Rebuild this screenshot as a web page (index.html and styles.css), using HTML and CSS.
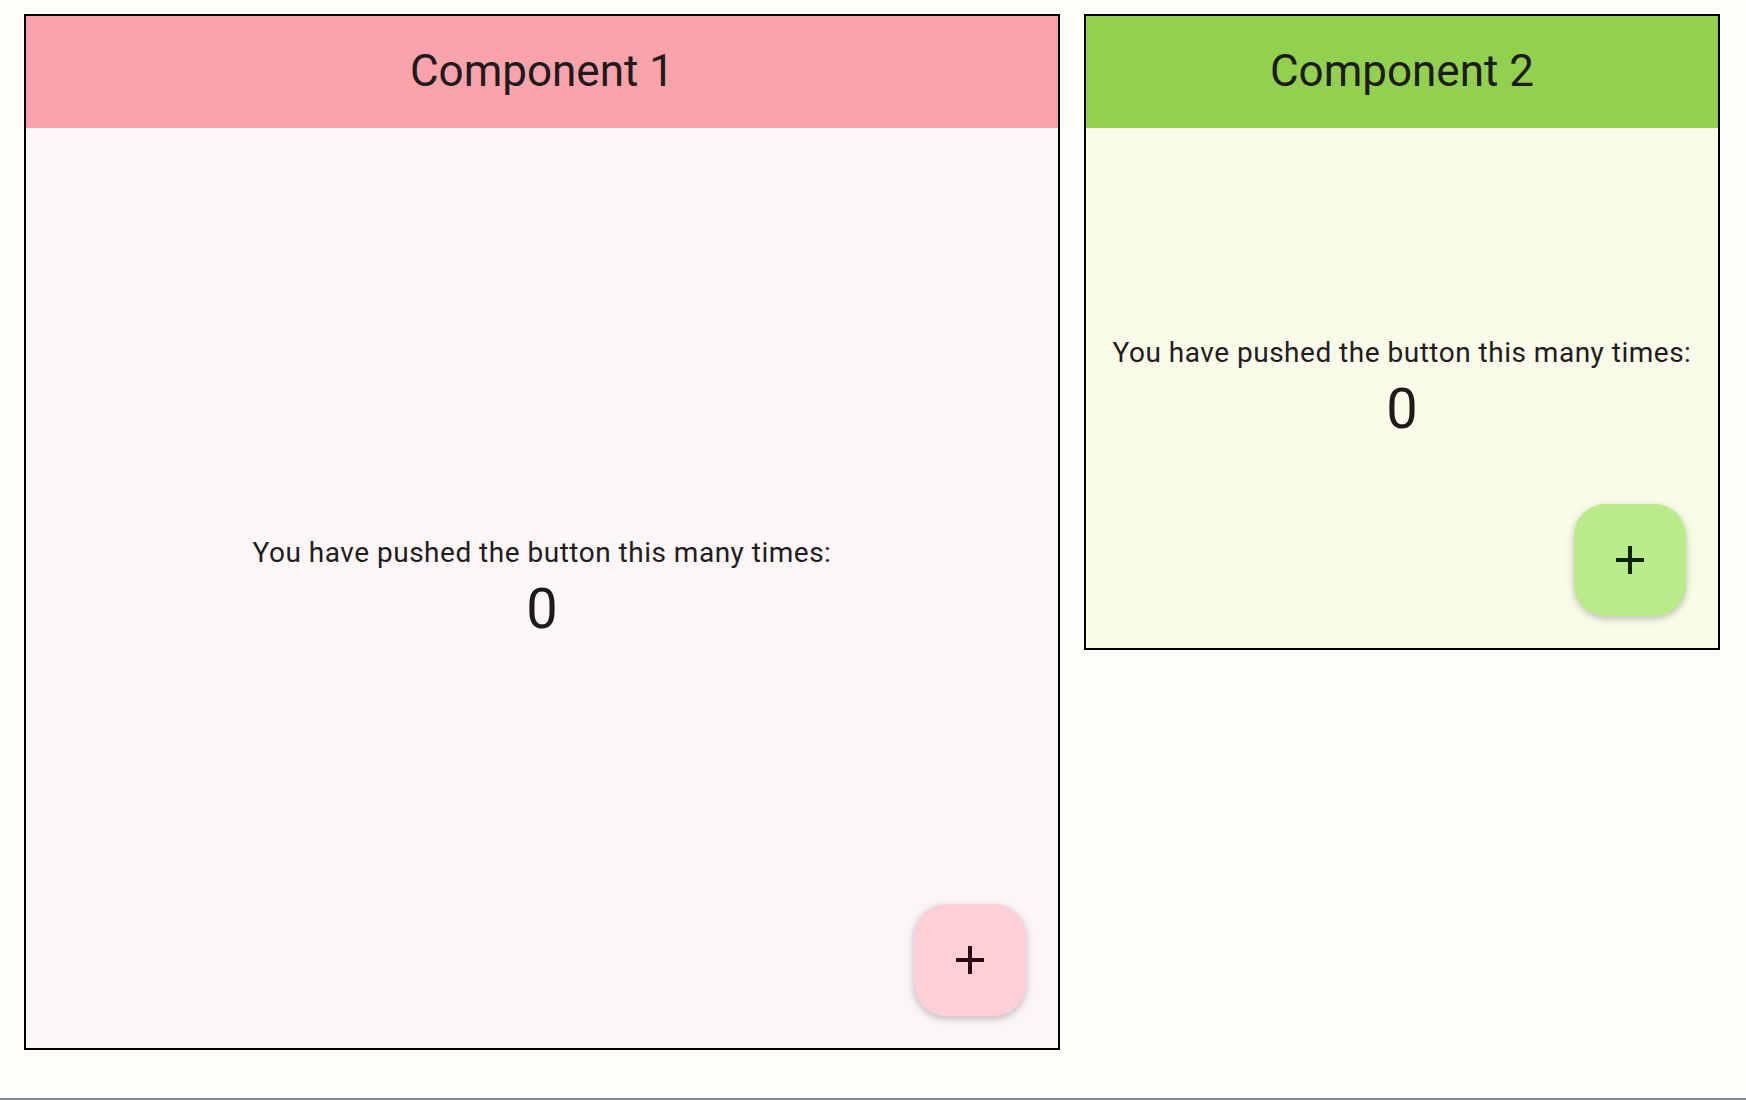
FILE: index.html
```html
<!DOCTYPE html>
<html>
<head>
<meta charset="utf-8">
<link rel="stylesheet" href="styles.css">
</head>
<body>
<div class="page">
  <section class="panel panel-pink">
    <header class="panel-head">Component 1</header>
    <div class="panel-body">
      <div class="counter">
        <p class="counter-label">You have pushed the button this many times:</p>
        <p class="counter-value">0</p>
      </div>
      <button class="fab" type="button" aria-label="Increment">
        <svg viewBox="0 0 24 24" width="48" height="48"><path d="M19 13h-6v6h-2v-6H5v-2h6V5h2v6h6v2z"/></svg>
      </button>
    </div>
  </section>
  <section class="panel panel-green">
    <header class="panel-head">Component 2</header>
    <div class="panel-body">
      <div class="counter">
        <p class="counter-label">You have pushed the button this many times:</p>
        <p class="counter-value">0</p>
      </div>
      <button class="fab" type="button" aria-label="Increment">
        <svg viewBox="0 0 24 24" width="48" height="48"><path d="M19 13h-6v6h-2v-6H5v-2h6V5h2v6h6v2z"/></svg>
      </button>
    </div>
  </section>
</div>
</body>
</html>
```
FILE: styles.css
```css
html, body {
  margin: 0;
  padding: 0;
}
body {
  background: #fdfdf9;
  font-family: Roboto, "Noto Sans", "Liberation Sans", sans-serif;
  color: #201a1b;
}
.page {
  height: 1100px;
  box-sizing: border-box;
  padding: 14px 24px 0;
  border-bottom: 2px solid #85859a;
  display: flex;
  align-items: flex-start;
  gap: 24px;
}
.panel {
  box-sizing: border-box;
  border: 2px solid #000;
  display: flex;
  flex-direction: column;
}
.panel-pink {
  width: 1036px;
  height: 1036px;
  background: #fcf6f9;
}
.panel-green {
  width: 636px;
  height: 636px;
  background: #fbfbea;
}
.panel-head {
  height: 112px;
  box-sizing: border-box;
  padding-bottom: 2px;
  flex: none;
  display: flex;
  align-items: center;
  justify-content: center;
  font-size: 44px;
  font-weight: 400;
  color: #1d1b1c;
}
.panel-pink .panel-head { background: #fba3ab; }
.panel-green .panel-head { background: #92d14f; }
.panel-body {
  flex: 1;
  position: relative;
  display: flex;
  align-items: center;
  justify-content: center;
}
.counter {
  display: flex;
  flex-direction: column;
  align-items: center;
  padding-top: 2px;
}
.counter-label {
  margin: 0;
  font-size: 28px;
  line-height: 40px;
  letter-spacing: 0.5px;
  color: #221c1d;
}
.counter-value {
  margin: 0;
  font-size: 56px;
  line-height: 72px;
  color: #201a1b;
}
.fab {
  position: absolute;
  right: 32px;
  bottom: 32px;
  width: 112px;
  height: 112px;
  border: none;
  padding: 0;
  border-radius: 32px;
  display: flex;
  align-items: center;
  justify-content: center;
  box-shadow: 0 3px 6px rgba(0,0,0,0.16), 0 2px 12px rgba(0,0,0,0.10);
}
.panel-pink .fab { background: #fdd0d7; fill: #2c0b12; }
.panel-green .fab { background: #b9ec89; fill: #13200a; }
```
